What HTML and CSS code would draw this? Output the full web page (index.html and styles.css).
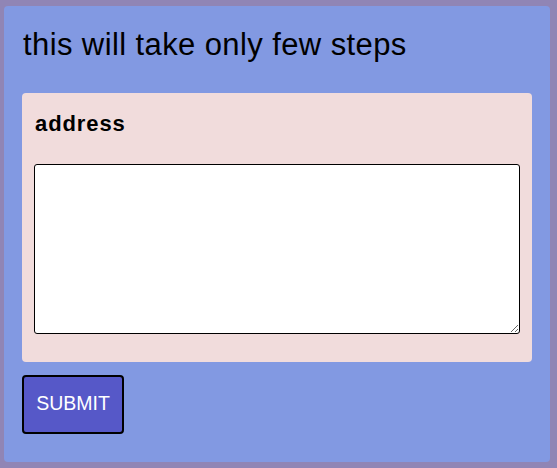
FILE: index.html
```html
<!DOCTYPE html>
<html>
<head>
<meta charset="utf-8">
<link rel="stylesheet" href="styles.css">
</head>
<body>
<div class="card">
  <h1 class="title">this will take only few steps</h1>
  <div class="field">
    <label class="label" for="addr">address</label>
    <textarea id="addr" class="input"></textarea>
  </div>
  <button class="submit">SUBMIT</button>
</div>
</body>
</html>
```
FILE: styles.css
```css
html, body {
  margin: 0;
  padding: 0;
}
body {
  background: #9085b5;
  padding: 6px 7px 6px 4px;
  font-family: "Liberation Sans", Arial, sans-serif;
}
.card {
  background: #8299e2;
  border-radius: 4px;
  height: 456px;
  box-sizing: border-box;
  padding: 0 18px;
  display: flex;
  flex-direction: column;
  align-items: flex-start;
}
.title {
  margin: 20px 0 0 1px;
  font-size: 31px;
  letter-spacing: 0.4px;
  font-weight: normal;
  line-height: 38px;
  color: #000;
}
.field {
  align-self: stretch;
  margin-top: 29px;
  background: #f1dcdc;
  border-radius: 4px;
  padding: 18px 12px 28px 12px;
  display: flex;
  flex-direction: column;
}
.label {
  font-size: 22px;
  letter-spacing: 0.9px;
  font-weight: bold;
  line-height: 26px;
  margin-left: 1px;
  color: #000;
}
.input {
  margin-top: 27px;
  height: 170px;
  box-sizing: border-box;
  border: 1px solid #000;
  border-radius: 3px;
  background: #fff;
  padding: 2px;
  font: 14px "Liberation Sans", Arial, sans-serif;
}
.submit {
  margin-top: 13px;
  width: 102px;
  height: 59px;
  background: #5658c8;
  border: 2px solid #000;
  border-radius: 4px;
  color: #fff;
  font: 19.5px "Liberation Sans", Arial, sans-serif;
  padding: 0 0 2px 0;
}
```
